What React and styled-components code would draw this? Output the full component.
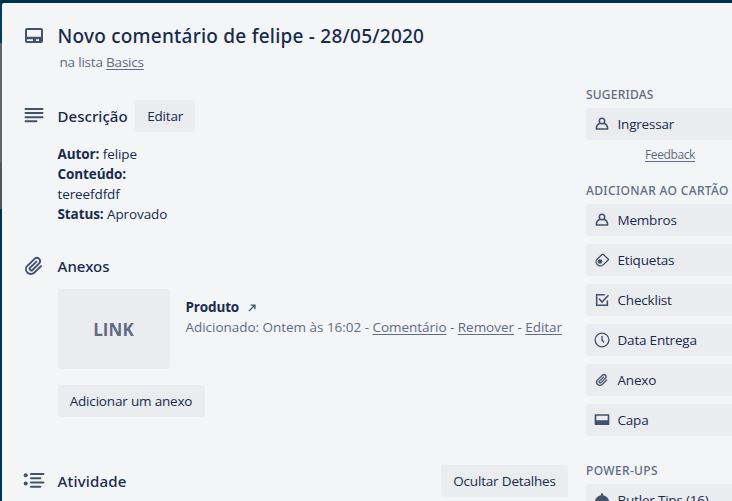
import React from "react";
import styled, { createGlobalStyle } from "styled-components";

const GlobalStyle = createGlobalStyle`
  * { box-sizing: border-box; }
  body { margin: 0; overflow: hidden; }
`;

const Backdrop = styled.div`
  width: 732px;
  height: 501px;
  padding: 3px 0 0 2px;
  overflow: hidden;
  background:
    linear-gradient(#00304a, #00304a) 0 0 / 100% 3px no-repeat,
    linear-gradient(#033c5c 0 43px, #636466 43px 163px, #555658 163px 209px, #003452 209px);
  font-family: "Open Sans", "Noto Sans", sans-serif;
  font-size: 13.5px;
  line-height: 20px;
  letter-spacing: -0.1px;
  color: #172b4d;
`;

const Dialog = styled.div`
  width: 768px;
  height: 498px;
  background: #f4f5f7;
  border-radius: 2px 0 0 0;
  overflow: hidden;
`;

const Header = styled.header`
  height: 81px;
  padding: 19px 0 0 55.5px;
`;

const TitleRow = styled.div`
  display: flex;
  align-items: center;
  height: 28px;
  margin-left: -36px;
`;

const Title = styled.h1`
  margin: 0;
  font: 500 19px/28px "Noto Sans", sans-serif;
  letter-spacing: 0.23px;
  white-space: nowrap;
`;

const Subtitle = styled.p`
  margin: 2px 0 0 2px;
  color: #5e6c84;
  letter-spacing: -0.2px;
`;

const Columns = styled.div`
  display: flex;
  gap: 18px;
`;

const Main = styled.main`
  width: 566px;
  padding: 16px 0 0 19.5px;
`;

const SectionHead = styled.div`
  display: flex;
  align-items: center;
  height: 32px;
`;

const SectionTitle = styled.h2`
  margin: 0 7.5px 0 0;
  font: 500 15px/20px "Noto Sans", sans-serif;
  letter-spacing: ${(p) => p.$spacing || "0.05px"};
`;

const IconSlot = styled.span`
  display: flex;
  flex: none;
  width: ${(p) => (p.$small ? 24 : 36)}px;
  color: #42526e;
  svg {
    display: block;
    width: ${(p) => (p.$small ? 16 : 24)}px;
    height: ${(p) => (p.$small ? 16 : 24)}px;
  }
`;

const Button = styled.button`
  display: flex;
  align-items: center;
  height: 32px;
  padding: 0 0 1px;
  justify-content: center;
  width: ${(p) => p.$width}px;
  margin-left: ${(p) => (p.$end ? "auto" : "0")};
  border: 0;
  border-radius: 3px;
  background: #ebecf0;
  color: #172b4d;
  font: inherit;
  letter-spacing: -0.18px;
  white-space: nowrap;
`;

const SideButton = styled(Button)`
  width: 168px;
  justify-content: flex-start;
  padding-left: 7.5px;
  margin-left: 0;
  letter-spacing: -0.2px;
`;

const SectionBody = styled.div`
  margin-left: 36px;
`;

const Description = styled(SectionBody)`
  margin-top: 12px;
  height: 106px;
  p { margin: 0; }
  strong { letter-spacing: -0.1px; }
`;

const Attachment = styled.div`
  display: flex;
  margin: 7px 0 16px;
  height: 80px;
`;

const Thumbnail = styled.div`
  display: flex;
  align-items: center;
  justify-content: center;
  width: 112px;
  padding-top: 2px;
  border-radius: 3px;
  background: #ebecf0;
  color: #5e6c84;
  font-size: 17px;
  font-weight: 700;
  letter-spacing: 0.1px;
`;

const AttachmentInfo = styled.div`
  padding: 8px 0 0 16px;
  color: #5e6c84;
  letter-spacing: -0.03px;
  white-space: nowrap;
`;

const AttachmentName = styled.div`
  display: flex;
  align-items: center;
  color: #172b4d;
  font-weight: 700;
  letter-spacing: -0.15px;
  svg { width: 8px; height: 8px; margin: 1px 0 0 9px; color: #42526e; }
`;

const Link = styled.a`
  color: inherit;
  text-decoration: underline;
  text-underline-offset: 1.5px;
`;

const ActivityHead = styled(SectionHead)`
  margin-top: 48px;
`;

const Sidebar = styled.aside`
  width: 168px;
  padding-top: 1px;
`;

const SideTitle = styled.h3`
  margin: 0 0 3px;
  padding-top: ${(p) => p.$gap || 0}px;
  color: #5e6c84;
  font: 500 12px/20px "Noto Sans", sans-serif;
  letter-spacing: ${(p) => p.$spacing || "0.35px"};
  white-space: nowrap;
`;

const Feedback = styled.div`
  height: 30px;
  color: #5e6c84;
  font-size: 12px;
  line-height: 30px;
  letter-spacing: -0.38px;
  text-align: center;
`;

const ButtonList = styled.div`
  display: grid;
  gap: 8px;
`;

const line = { fill: "none", stroke: "currentColor", strokeWidth: 2, strokeLinecap: "round", strokeLinejoin: "round" };

const icons = {
  card: (
    <path fill="currentColor" fillRule="evenodd" d="M5 4h14a2 2 0 0 1 2 2v11a2 2 0 0 1-2 2H5a2 2 0 0 1-2-2V6a2 2 0 0 1 2-2zm0 2v6.800h14V6H5zm0 9.200v1.800h6v-1.800H5zm9 0v1.800h3v-1.800h-3z" />
  ),
  description: <path {...line} d="M3.500 5h17M3.500 9.100h17M3.500 13.200h17M3.500 17.300h11" />,
  clip: (
    <path fill="currentColor" d="M11.643 17.965c-1.53 1.495-4.016 1.496-5.542.004a3.773 3.773 0 0 1 .002-5.412l7.147-6.985a2.316 2.316 0 0 1 3.233-.003c.893.873.895 2.282.004 3.153l-6.703 6.55a.653.653 0 0 1-.914-.008.62.62 0 0 1 0-.902l6.229-6.087a.941.941 0 0 0 0-1.353.995.995 0 0 0-1.384 0l-6.229 6.087a2.502 2.502 0 0 0 0 3.607 2.643 2.643 0 0 0 3.683.009l6.703-6.55a4.074 4.074 0 0 0-.003-5.859 4.306 4.306 0 0 0-6.002.003l-7.148 6.985a5.655 5.655 0 0 0-.001 8.118c2.29 2.24 6.015 2.239 8.31-.005l6.686-6.533a.941.941 0 0 0 0-1.353.995.995 0 0 0-1.384 0l-6.687 6.534z" />
  ),
  activity: (
    <>
      <circle cx="3.700" cy="6.300" r="2" fill="currentColor" />
      <circle cx="3.700" cy="14.400" r="2" fill="currentColor" />
      <path {...line} d="M9 5.100h12.400M9 9.300h9.400M9 13.500h12.400M9 17.700h9.400" />
    </>
  ),
  member: (
    <>
      <circle {...line} strokeWidth="2.300" cx="12" cy="7.500" r="4.100" />
      <path {...line} strokeWidth="2.300" d="M8.300 11.300C5.200 12.700 3.500 15.500 3.500 19.500h17c0-4-1.700-6.800-4.800-8.200" />
    </>
  ),
  label: (
    <>
      <path {...line} d="M13.600 3.500 22 11.200 13.600 19.300C11.500 21.400 7.400 21.400 5.200 19.200S2.300 13.500 4.300 11.400L12 3.900Q12.800 3 13.600 3.500z" />
      <circle cx="9" cy="14.300" r="3.500" fill="currentColor" />
    </>
  ),
  check: (
    <path {...line} strokeWidth="2.300" strokeLinejoin="miter" d="M15.500 4H4v16h16v-6.500M8 10.500l4 4.500 9-9.500" />
  ),
  clock: (
    <>
      <circle {...line} cx="12" cy="12" r="10.300" />
      <path {...line} d="M12 6.500V12l2.500 3" />
    </>
  ),
  cover: (
    <path fill="currentColor" fillRule="evenodd" d="M2 3.500h20q1 0 1 1v14q0 1-1 1H2q-1 0-1-1v-14q0-1 1-1zm1.500 2v7h17v-7z" />
  ),
  butler: (
    <path fill="currentColor" d="M10.300 5V3.500q0-1.700 1.700-1.700t1.700 1.700V5C18.500 5.800 22.500 9.500 22.500 14.500h-21C1.500 9.500 5.500 5.800 10.300 5zM2 16h20v3H2z" />
  ),
};

function Icon({ name, small }) {
  return (
    <IconSlot $small={small} aria-hidden="true">
      <svg viewBox="0 0 24 24">{icons[name]}</svg>
    </IconSlot>
  );
}

const cardActions = [
  ["member", "Membros"],
  ["label", "Etiquetas"],
  ["check", "Checklist"],
  ["clock", "Data Entrega"],
  ["clip", "Anexo"],
  ["cover", "Capa"],
];

function SideAction({ icon, children }) {
  return (
    <SideButton>
      <Icon name={icon} small />
      <span>{children}</span>
    </SideButton>
  );
}

export default function App() {
  return (
    <>
      <GlobalStyle />
      <Backdrop>
        <Dialog>
          <Header>
            <TitleRow>
              <Icon name="card" />
              <Title>Novo comentário de felipe - 28/05/2020</Title>
            </TitleRow>
            <Subtitle>
              na lista <Link>Basics</Link>
            </Subtitle>
          </Header>
          <Columns>
            <Main>
              <SectionHead>
                <Icon name="description" />
                <SectionTitle>Descrição</SectionTitle>
                <Button $width={60}>Editar</Button>
              </SectionHead>
              <Description>
                <p><strong>Autor:</strong> felipe</p>
                <p><strong>Conteúdo:</strong></p>
                <p>tereefdfdf</p>
                <p><strong>Status:</strong> Aprovado</p>
              </Description>
              <SectionHead>
                <Icon name="clip" />
                <SectionTitle>Anexos</SectionTitle>
              </SectionHead>
              <SectionBody>
                <Attachment>
                  <Thumbnail>LINK</Thumbnail>
                  <AttachmentInfo>
                    <AttachmentName>
                      Produto
                      <svg viewBox="0 0 9 9">
                        <path d="M1 8 7.500 1.500M3 1.200h4.800V6" fill="none" stroke="currentColor" strokeWidth="1.500" />
                      </svg>
                    </AttachmentName>
                    <div>
                      Adicionado: Ontem às 16:02 - <Link>Comentário</Link> - <Link>Remover</Link> - <Link>Editar</Link>
                    </div>
                  </AttachmentInfo>
                </Attachment>
                <Button $width={147}>Adicionar um anexo</Button>
              </SectionBody>
              <ActivityHead>
                <Icon name="activity" />
                <SectionTitle $spacing="0.2px">Atividade</SectionTitle>
                <Button $width={127} $end>Ocultar Detalhes</Button>
              </ActivityHead>
            </Main>
            <Sidebar>
              <SideTitle $spacing="0.2px">SUGERIDAS</SideTitle>
              <SideAction icon="member">Ingressar</SideAction>
              <Feedback>
                <Link>Feedback</Link>
              </Feedback>
              <SideTitle $gap={11}>ADICIONAR AO CARTÃO</SideTitle>
              <ButtonList>
                {cardActions.map(([icon, label]) => (
                  <SideAction key={label} icon={icon}>{label}</SideAction>
                ))}
              </ButtonList>
              <SideTitle $gap={25}>POWER-UPS</SideTitle>
              <SideAction icon="butler">Butler Tips (16)</SideAction>
            </Sidebar>
          </Columns>
        </Dialog>
      </Backdrop>
    </>
  );
}
